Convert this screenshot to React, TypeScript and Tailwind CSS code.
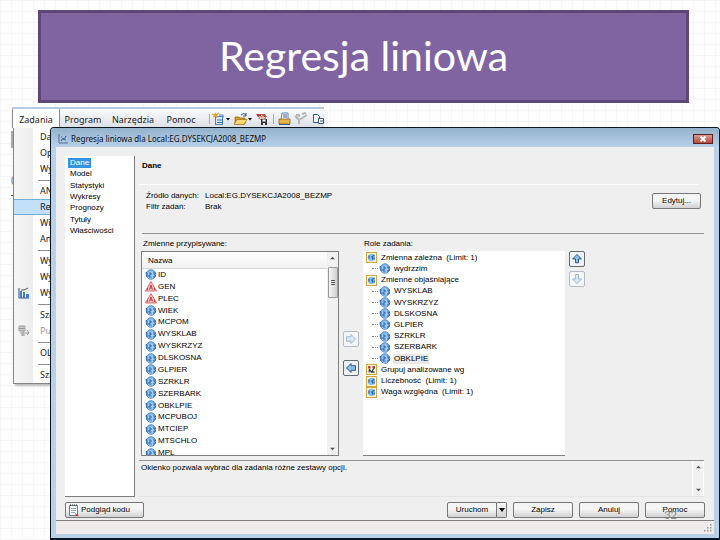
import type { ReactNode } from "react";

const NAV = ["Dane", "Model", "Statystyki", "Wykresy", "Prognozy", "Tytuły", "Właściwości"];

const VARIABLES: { name: string; text?: boolean }[] = [
  { name: "ID" },
  { name: "GEN", text: true },
  { name: "PLEC", text: true },
  { name: "WIEK" },
  { name: "MCPOM" },
  { name: "WYSKLAB" },
  { name: "WYSKRZYZ" },
  { name: "DLSKOSNA" },
  { name: "GLPIER" },
  { name: "SZRKLR" },
  { name: "SZERBARK" },
  { name: "OBKLPIE" },
  { name: "MCPUBOJ" },
  { name: "MTCIEP" },
  { name: "MTSCHLO" },
  { name: "MPL" },
];

const ROLES: { name: string; kind: "role" | "group" | "var"; selected?: boolean }[] = [
  { name: "Zmienna zależna  (Limit: 1)", kind: "role" },
  { name: "wydrzzim", kind: "var" },
  { name: "Zmienne objaśniające", kind: "role" },
  { name: "WYSKLAB", kind: "var" },
  { name: "WYSKRZYZ", kind: "var" },
  { name: "DLSKOSNA", kind: "var" },
  { name: "GLPIER", kind: "var" },
  { name: "SZRKLR", kind: "var" },
  { name: "SZERBARK", kind: "var" },
  { name: "OBKLPIE", kind: "var", selected: true },
  { name: "Grupuj analizowane wg", kind: "group" },
  { name: "Liczebność  (Limit: 1)", kind: "role" },
  { name: "Waga względna  (Limit: 1)", kind: "role" },
];

type MenuEntry = { label: string; icon?: "chart" | "publish"; active?: boolean; disabled?: boolean } | null;

const MENU: MenuEntry[] = [
  { label: "Dane" },
  { label: "Opis" },
  { label: "Wykres" },
  null,
  { label: "ANOVA" },
  { label: "Regresja", active: true },
  { label: "Wielowymiarowe" },
  { label: "Analiza" },
  null,
  { label: "Wydajność" },
  { label: "Wykresy kontrolne" },
  { label: "Wykresy Pareto", icon: "chart" },
  null,
  { label: "Szeregi" },
  { label: "Publikuj", icon: "publish", disabled: true },
  null,
  { label: "OLAP" },
  null,
  { label: "Szablony" },
];

function NumberIcon() {
  return (
    <svg className="h-[11px] w-3 shrink-0" viewBox="0 0 24 22" aria-hidden="true">
      <circle cx="12" cy="11" r="9.500" fill="#a5cdf2" stroke="#3f7fc4" strokeWidth="1.800" />
      <path d="M5 6Q12 0 19 6" fill="none" stroke="#6fa9e0" strokeWidth="2.500" />
      <path d="M1 8l3-1v9M8 8h4v4H8v4h5M16 8h5l-3 3q3 1 3 3t-5 2" fill="none" stroke="#1f60b0" strokeWidth="2" />
    </svg>
  );
}

function CharIcon() {
  return (
    <svg className="h-[11px] w-3 shrink-0" viewBox="0 0 24 22" aria-hidden="true">
      <path d="M12 1L23 20H1z" fill="#f6c3c0" stroke="#d0585a" strokeWidth="1.800" />
      <path d="M9 17l3-9 3 9M10 14h4M5 18v-4M19 18v-4" fill="none" stroke="#c03a40" strokeWidth="1.800" />
    </svg>
  );
}

function RoleIcon({ group }: { group?: boolean }) {
  return (
    <svg className="h-[11px] w-[11px] shrink-0" viewBox="0 0 22 22" aria-hidden="true">
      <rect x="1" y="1" width="20" height="20" fill="#fff6d8" stroke="#d6a53c" strokeWidth="2" />
      {group ? (
        <>
          <path d="M4 4h5v5H4zM13 4h5v5h-5z" fill="#b64a3e" />
          <path d="M5 12h4v5H5zM12 14h5v4h-5z" fill="#5b6a94" />
          <path d="M6 10l5 6 6-9" fill="none" stroke="#343a52" strokeWidth="2.400" />
        </>
      ) : (
        <>
          <circle cx="11" cy="11" r="7.500" fill="#8fbfec" />
          <path d="M6 7v6M10 10h3v5M17 6l-4 3M16 11v4" fill="none" stroke="#2460ab" strokeWidth="2.200" />
        </>
      )}
    </svg>
  );
}

function Arrow({ dir, faded }: { dir: "left" | "right" | "up" | "down"; faded?: boolean }) {
  const d = {
    left: "M2 8l6-6v3h6v6H8v3z",
    right: "M14 8L8 2v3H2v6h6v3z",
    up: "M8 2l6 6h-4v5H6V8H2z",
    down: "M8 14l6-6h-4V2H6v6H2z",
  }[dir];
  return (
    <svg className="h-3 w-3" viewBox="0 0 16 16" aria-hidden="true">
      <path d={d} fill={faded ? "#dbe9f5" : "#8fc0ea"} stroke={faded ? "#9db8d0" : "#2b5486"} strokeWidth="1.300" />
    </svg>
  );
}

function ArrowButton({ dir, faded, label }: { dir: "left" | "right" | "up" | "down"; faded?: boolean; label: string }) {
  return (
    <button
      aria-label={label}
      disabled={faded}
      className={
        "flex h-4 w-4 items-center justify-center rounded-[2px] border " +
        (faded ? "border-[#b3bcc6] bg-[#f4f6f8]" : "border-[#646a72] bg-[#eef4fa]")
      }
    >
      <Arrow dir={dir} faded={faded} />
    </button>
  );
}

function PushButton({ children, className }: { children: ReactNode; className: string }) {
  return (
    <button
      className={
        "flex h-4 items-center rounded-[2px] border border-[#777] bg-linear-to-b from-[#f5f5f5] from-45% to-[#d2d2d2] whitespace-nowrap " +
        className
      }
    >
      {children}
    </button>
  );
}

function Toolbar() {
  return (
    <svg className="h-4 w-[116px] shrink-0" viewBox="0 0 116 16" aria-hidden="true">
      <path d="M1.500 3v10M65.500 3v10" stroke="#a9adb3" />
      <g>
        <rect x="7.500" y="5.500" width="7" height="8" fill="#dcebfa" stroke="#4b83bd" />
        <path d="M7 2l2 5M11 2l-6 4M4 3l6 2" stroke="#e29a33" strokeWidth="1.200" />
        <path d="M9 9h6M9 11.500h6" stroke="#2b6db0" />
        <path d="M11 4h4v3" fill="none" stroke="#4b83bd" />
      </g>
      <path d="M18 7h4l-2 2.500zM40 7h4l-2 2.500z" fill="#111" />
      <g>
        <path d="M27 6h4l1 1h5v6H27z" fill="#d89c25" stroke="#8f6416" strokeWidth=".7" />
        <path d="M26 13.500l3-5h10l-3 5z" fill="#ffd871" stroke="#9b701d" strokeWidth=".7" />
        <path d="M33 4q3-3 5 0M38 2v3h-3" fill="none" stroke="#354f77" />
      </g>
      <g>
        <path d="M48 3h9l2 3-8 2z" fill="#c0503f" />
        <path d="M50 4l7 2v6l-5-4z" fill="#e8b7ab" stroke="#6b2a20" strokeWidth=".8" />
        <path d="M50 6l3 2M53 4l4 3" stroke="#fff" strokeWidth=".8" />
        <rect x="53" y="8" width="6" height="6" fill="#38383a" />
        <path d="M54.500 8.500h3v2h-3zM55 12h2v2h-2z" fill="#fff" />
      </g>
      <g>
        <path d="M74 2h6v7h-7z" fill="#fff" stroke="#5486bd" />
        <path d="M71 8h11v5H71z" fill="#e5b346" stroke="#8c6a24" strokeWidth=".8" />
        <path d="M71 13.500h11M75 4h4M75 6h4" stroke="#365c92" />
      </g>
      <path d="M87 5l4 4v4M99 4l-8 5M94 3l4-1M88 4h3v2" fill="none" stroke="#b3b6b9" strokeWidth="2" />
      <g fill="#fff" stroke="#31588f">
        <path d="M105.500 3.500h4l2 2v6h-6z" />
        <path d="M110.500 7.500h5v5h-5zM112 10h4" />
      </g>
    </svg>
  );
}

function AppMenu() {
  return (
    <div className="absolute top-[107px] left-[11px] w-[313px] font-['Noto_Sans',sans-serif] text-[9px] leading-3 text-[#1c1c1c]">
      <div className="ml-px flex h-[21px] items-center border-t-2 border-[#b5cbdf] bg-linear-to-b from-[#fafbfc] to-[#dcdfe5]">
        <button className="h-full w-12 border-x border-[#8a8a8a] bg-white pt-0.5">Zadania</button>
        <button className="w-[46px] pt-0.5">Program</button>
        <button className="w-[54px] pt-0.5">Narzędzia</button>
        <button className="w-[42px] pt-0.5">Pomoc</button>
        <span className="flex-1" />
        <Toolbar />
      </div>
      <div className="flex">
        <div className="mt-[3px] h-[17px] w-0.5 bg-[#a9a9a9]" />
        <div className="w-[130px] border-b border-l border-[#858585] bg-linear-to-r from-[#f5f5f5] from-0% to-[#ededed] to-[19px] shadow-[2px_2px_2px_#bbb]">
          <div className="bg-linear-to-r from-transparent from-[19px] to-white to-[19px] pt-px">
            {MENU.map((item, i) =>
              item ? (
                <button
                  key={i}
                  disabled={item.disabled}
                  className={
                    "flex h-4 w-full items-center overflow-hidden whitespace-nowrap " +
                    (item.active ? "border-y border-[#72add6] bg-[#c3e0fb]" : "") +
                    (item.disabled ? " text-[#9a9a9a]" : "")
                  }
                >
                  <span className="flex w-[26px] shrink-0 pl-1">
                    {item.icon === "chart" && (
                      <svg className="h-3 w-3" viewBox="0 0 12 12" aria-hidden="true">
                        <path d="M1 1v10h10" fill="none" stroke="#27518c" />
                        <path d="M2 4h2v7H2zM5 5h2v6H5zM8 7h3v4H8z" fill="#477fd0" />
                        <path d="M3 3l3 0 4-2" fill="none" stroke="#555" />
                      </svg>
                    )}
                    {item.icon === "publish" && (
                      <svg className="h-3 w-3" viewBox="0 0 12 12" aria-hidden="true">
                        <path d="M1 1h6v5H1zM3 1v5M5 1v5M1 3.500h6M5 6v5M2 8h9M9 5l2 3-2 2M3 10h4" fill="none" stroke="#9b9b9b" />
                      </svg>
                    )}
                  </span>
                  {item.label}
                </button>
              ) : (
                <div key={i} className="flex h-1.5 items-center pl-6">
                  <div className="h-px w-full bg-[#8f8f8f]" />
                </div>
              ),
            )}
          </div>
        </div>
      </div>
    </div>
  );
}

function ScrollArrow({ down }: { down?: boolean }) {
  return (
    <svg className="h-[5px] w-[5px]" viewBox="0 0 6 6" aria-hidden="true">
      <path d={down ? "M0 2h6L3 5z" : "M0 4h6L3 1z"} fill="#555" />
    </svg>
  );
}

function Dialog() {
  return (
    <section
      aria-label="Regresja liniowa"
      className="absolute top-[127px] right-0 bottom-0 left-[50px] flex flex-col rounded-t-[4px] border border-b-2 border-[#0c1620] bg-[#b9d1e8] px-[5px] pb-1 font-['Liberation_Sans',sans-serif] text-[8px] leading-[10px] text-black"
    >
      <header className="-mx-[5px] flex h-[19px] items-center rounded-t-[3px] bg-linear-to-b from-[#94b1cd] to-[#b9d1ea] pt-0.5 pr-1.5 pl-[7px]">
        <svg className="mr-0.5 h-2.5 w-2.5" viewBox="0 0 10 10" aria-hidden="true">
          <path d="M1 0v9h9" fill="none" stroke="#4f7294" />
          <path d="M3 7l2-3 1 2 2-4M3 3h1M7 6h1" fill="none" stroke="#2b5c9c" />
        </svg>
        <h2 className="flex-1 pl-px font-['Noto_Sans',sans-serif] whitespace-nowrap text-[#111]">
          Regresja liniowa dla Local:EG.DYSEKCJA2008_BEZMP
        </h2>
        <button
          aria-label="Zamknij"
          className="flex h-2.5 w-5 items-center justify-center border border-[#5c2224] bg-linear-to-b from-[#dd9990] to-[#b4453a]"
        >
          <svg className="h-1.5 w-2" viewBox="0 0 8 6" aria-hidden="true">
            <path d="M1.500 .5l5 5M6.500 .5l-5 5" stroke="#fff" strokeWidth="2" />
          </svg>
        </button>
      </header>

      <div className="flex min-h-0 flex-1 flex-col bg-[#efefef]">
        <div className="flex min-h-0 flex-1 pt-[9px] pr-2.5 pl-[9px]">
          <nav className="w-[70px] shrink-0 border-r border-b border-[#7c7c7c] bg-white pl-[3px]">
            <ul className="grid h-20 auto-rows-fr pt-px">
              {NAV.map((n, i) => (
                <li key={n} className="flex items-center">
                  <button className={i === 0 ? "bg-[#3394e0] px-0.5 text-white" : "px-0.5 leading-[9px]"}>{n}</button>
                </li>
              ))}
            </ul>
          </nav>

          <main className="ml-1 flex min-h-0 min-w-0 flex-1 flex-col">
            <h3 className="mr-1.5 h-[29px] shrink-0 border-b border-white pt-[5px] pl-[3px] font-bold">Dane</h3>
            <div className="ml-[3px] flex h-[49px] shrink-0 items-start justify-between border-b border-[#929292] pt-1 pr-[3px] pl-1">
              <dl className="grid grid-cols-[59px_auto] pt-px leading-[11px] whitespace-nowrap">
                <dt>Źródło danych:</dt>
                <dd>Local:EG.DYSEKCJA2008_BEZMP</dd>
                <dt>Filtr zadań:</dt>
                <dd>Brak</dd>
              </dl>
              <PushButton className="mt-1 w-[49px] justify-center">Edytuj...</PushButton>
            </div>

            <div className="ml-0.5 grid min-h-0 flex-1 grid-cols-[198fr_16px_202fr_16px_115fr] grid-rows-[17px_1fr] gap-x-1 whitespace-nowrap">
              <span className="pt-[5px] pl-0.5">Zmienne przypisywane:</span>
              <span />
              <span className="pt-[5px] pl-px">Role zadania:</span>
              <span />
              <span />

              <div className="flex min-h-0 border border-[#7f7f7f] bg-white">
                <div className="flex min-w-0 flex-1 flex-col overflow-hidden">
                  <div className="h-[17px] shrink-0 border-b border-[#d9d9d9] bg-linear-to-b from-white to-[#f1f1f1] pt-1 pl-1.5">Nazwa</div>
                  <ul className="grid h-[190px] shrink-0 auto-rows-fr pl-[3px]">
                    {VARIABLES.map((v) => (
                      <li key={v.name} className="flex items-center gap-px">
                        {v.text ? <CharIcon /> : <NumberIcon />}
                        {v.name}
                      </li>
                    ))}
                  </ul>
                </div>
                <div className="flex w-[11px] flex-col items-center bg-[#f1f1f1] py-1">
                  <ScrollArrow />
                  <div className="mt-1.5 flex h-[31px] w-2.5 flex-col items-center justify-center gap-px rounded-[1px] border border-[#999] bg-linear-to-r from-[#f6f6f6] to-[#cfcfcf]">
                    <i className="h-px w-1 bg-[#555]" />
                    <i className="h-px w-1 bg-[#555]" />
                    <i className="h-px w-1 bg-[#555]" />
                  </div>
                  <span className="flex-1" />
                  <ScrollArrow down />
                </div>
              </div>

              <div className="flex flex-col gap-[13px] pt-20">
                <ArrowButton dir="right" faded label="Przypisz" />
                <ArrowButton dir="left" label="Usuń" />
              </div>

              <div className="min-h-0 overflow-hidden border-b border-[#7f7f7f] bg-white pt-px">
                <ul className="grid h-[146px] auto-rows-fr pl-[3px]">
                  {ROLES.map((r, i) =>
                    r.kind === "var" ? (
                      <li key={i} className="flex items-center pl-1.5">
                        <span className="mr-px w-1.5 border-t border-dotted border-[#888]" />
                        <NumberIcon />
                        <span className={r.selected ? "ml-0.5 bg-[#e9e9e9] px-px" : "ml-0.5 px-px"}>{r.name}</span>
                      </li>
                    ) : (
                      <li key={i} className="flex items-center gap-1 whitespace-pre">
                        <RoleIcon group={r.kind === "group"} />
                        {r.name}
                      </li>
                    ),
                  )}
                </ul>
              </div>

              <div className="flex flex-col gap-1">
                <ArrowButton dir="up" label="W górę" />
                <ArrowButton dir="down" faded label="W dół" />
              </div>
            </div>

            <div className="mt-1 flex h-[37px] shrink-0 border-t border-b border-t-[#929292] border-b-[#e4e4e4]">
              <p className="flex-1 pt-0.5 pl-0.5">Okienko pozwala wybrać dla zadania różne zestawy opcji.</p>
              <div className="flex w-3 flex-col items-center justify-between border-x border-white bg-[#f1f1f1] py-1">
                <ScrollArrow />
                <ScrollArrow down />
              </div>
            </div>
          </main>
        </div>

        <footer className="relative flex h-6 shrink-0 items-start gap-1.5 border-b border-[#808080] px-[9px] pt-[5px]">
          <PushButton className="mr-auto w-[79px] gap-0.5 pl-0.5">
            <svg className="h-3 w-[11px]" viewBox="0 0 11 12" aria-hidden="true">
              <path d="M1.500 1.500h8v10h-8z" fill="#fff" stroke="#5f7fa5" />
              <path d="M2 1h1M4 1h1M6 1h1M8 1h1" stroke="#222" />
              <path d="M3 4.500h5M3 6.500h5M3 8.500h4" stroke="#8ba7c8" />
              <path d="M7 9l4 3H8z" fill="#d02b2b" />
            </svg>
            Podgląd kodu
          </PushButton>
          <div className="flex">
            <PushButton className="w-[50px] justify-center rounded-r-none">Uruchom</PushButton>
            <button
              aria-label="Więcej"
              className="flex h-4 w-2.5 items-center justify-center rounded-r-[2px] border border-l-0 border-[#777] bg-linear-to-b from-[#f5f5f5] to-[#d2d2d2]"
            >
              <svg className="h-1 w-1.5" viewBox="0 0 6 4" aria-hidden="true">
                <path d="M0 0h6L3 4z" fill="#000" />
              </svg>
            </button>
          </div>
          <PushButton className="w-[60px] justify-center">Zapisz</PushButton>
          <PushButton className="w-[60px] justify-center">Anuluj</PushButton>
          <PushButton className="w-[60px] justify-center">Pomoc</PushButton>
          <span className="absolute right-[37px] bottom-0 font-[Lato,sans-serif] text-[11px] leading-[10px] text-[#8b8b8b]">32</span>
        </footer>
        <div className="flex h-[13px] shrink-0 items-end justify-end bg-[#efebea] pr-0.5 pb-0.5">
          <svg className="h-2 w-2" viewBox="0 0 8 8" aria-hidden="true">
            <path d="M6 0h1.500v1.500H6zM3 3h1.500v1.500H3zM6 3h1.500v1.500H6zM0 6h1.500v1.500H0zM3 6h1.500v1.500H3zM6 6h1.500v1.500H6z" fill="#999" />
          </svg>
        </div>
      </div>
    </section>
  );
}

export default function App() {
  return (
    <div className="relative min-h-screen overflow-hidden bg-[#fefefe] bg-[linear-gradient(to_right,#f6f6f6_1px,transparent_1px),linear-gradient(to_bottom,#f6f6f6_1px,transparent_1px)] bg-size-[11px_11px] pt-2.5">
      <h1 className="mr-[31px] ml-[38px] flex h-[93px] items-center justify-center border-3 border-[#5c4776] bg-[#8064a2] pb-0.5 font-[Lato,sans-serif] text-[41px] leading-none text-white">
        Regresja liniowa
      </h1>
      <AppMenu />
      <span className="absolute top-[174px] left-[11px] w-[2px] overflow-hidden font-['Liberation_Sans',sans-serif] text-[9px] leading-3 text-[#555]">(</span>
      <span className="absolute top-[195px] left-[11px] h-px w-[2px] bg-[#555]" />
      <Dialog />
    </div>
  );
}
